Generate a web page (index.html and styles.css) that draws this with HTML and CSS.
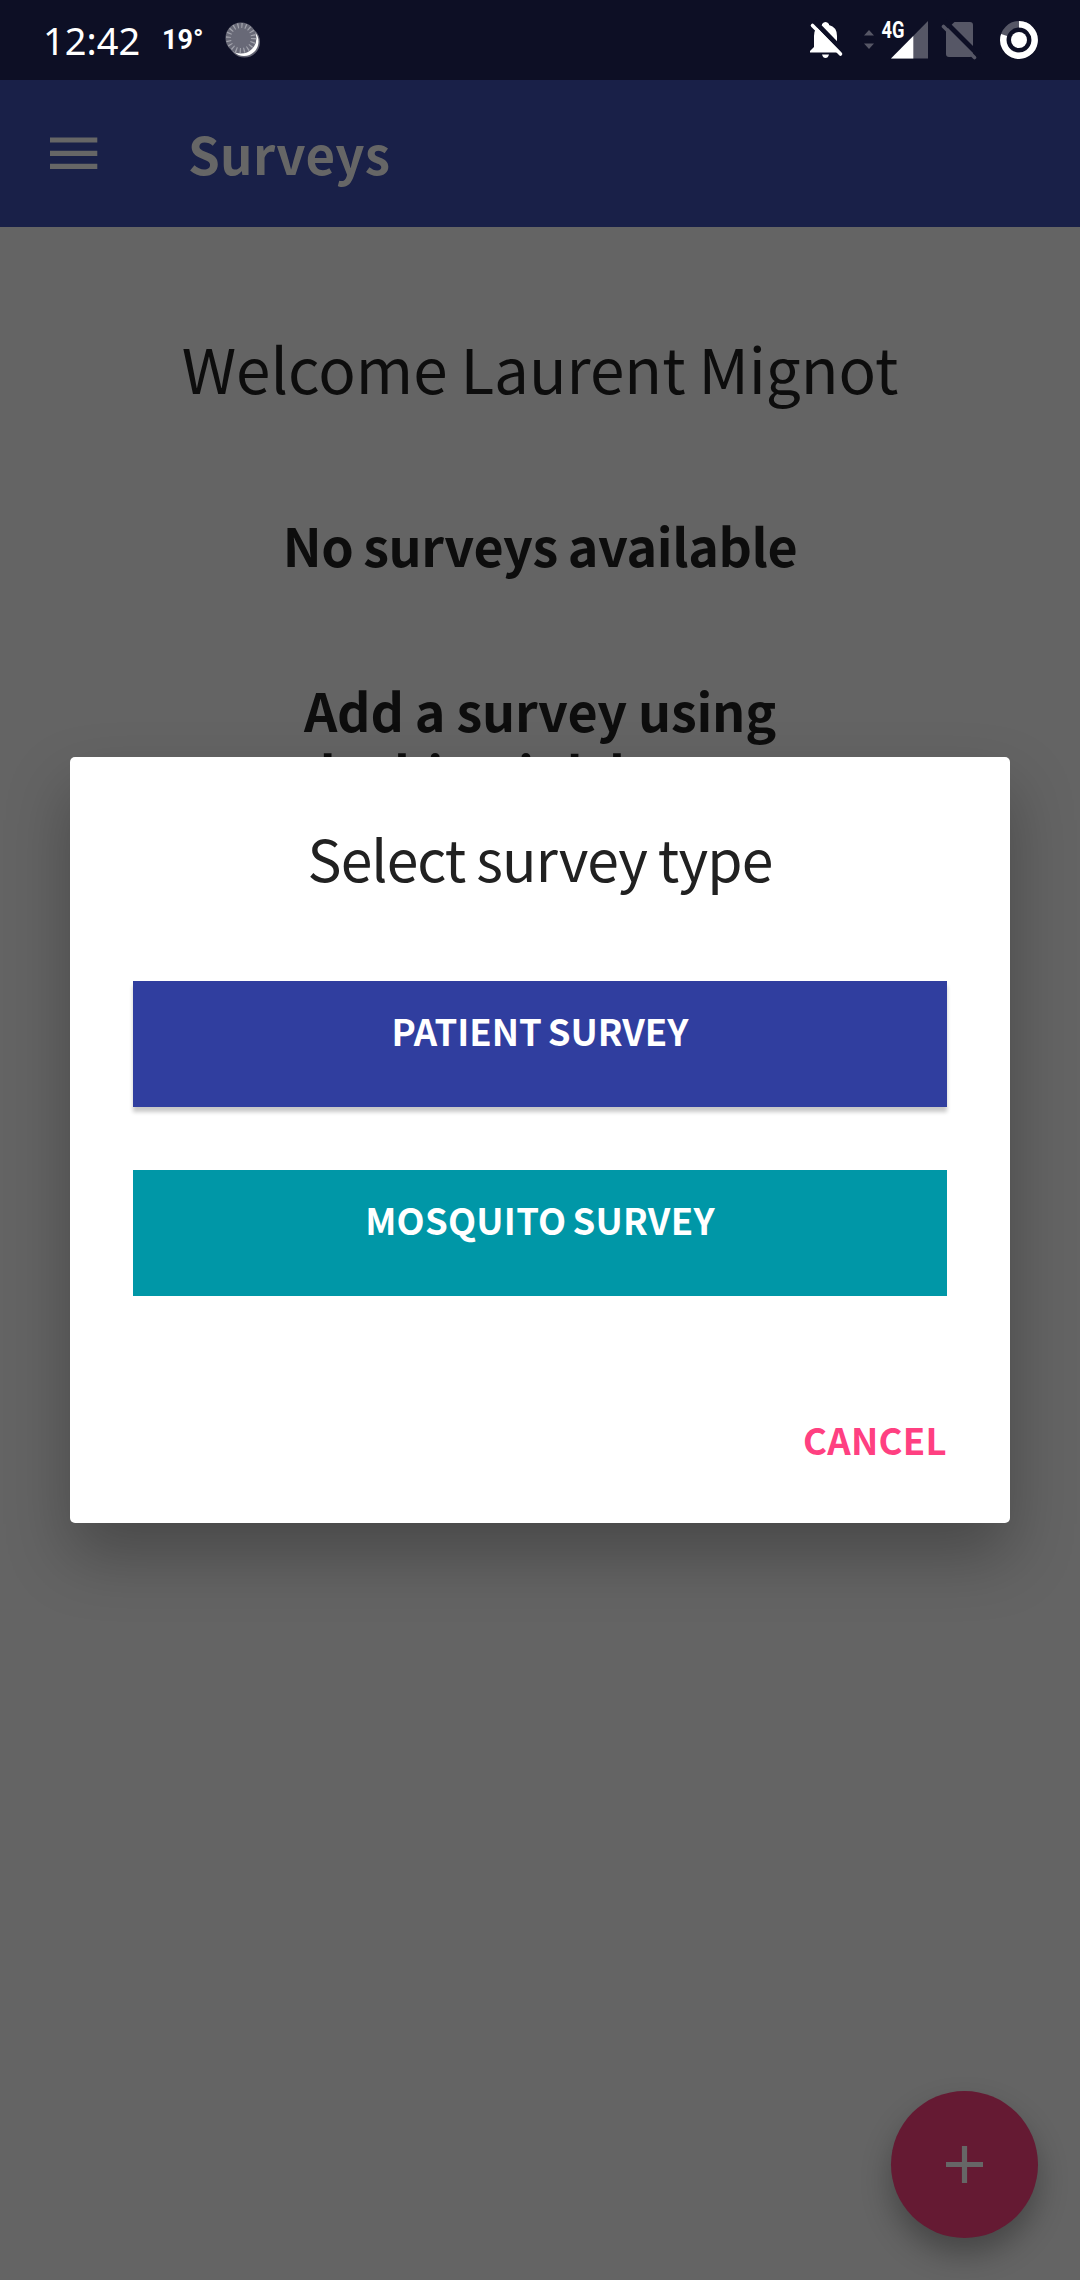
FILE: index.html
```html
<!DOCTYPE html>
<html lang="en">
<head>
<meta charset="utf-8">
<title>Surveys</title>
<link rel="stylesheet" href="styles.css">
</head>
<body>
<div class="screen">
  <header class="status">
    <span class="clock">12:42</span>
    <span class="temp">19°</span>
    <svg class="sync" width="36" height="38" viewBox="0 0 36 38">
      <circle cx="19.5" cy="21" r="15.5" fill="#fff" opacity=".35"/>
      <circle cx="19" cy="20.500" r="14.500" fill="#fff"/>
      <circle cx="16" cy="17" r="15.500" fill="#686977"/>
      <circle cx="16" cy="17" r="12.500" fill="none" stroke="#a3a4ad" stroke-width="5" stroke-dasharray="1.2 2.727"/>
    </svg>
    <svg class="indicators" width="240" height="50" viewBox="800 10 240 50">
      <g fill="#fff">
        <path d="M810 52.500v-1.500l4-4V36q0-9 8-11v-1q3.500-4 7 0v1q8 2 8 11v11l4 4v1.500zM822 54.500h7q-1 3.500-3.500 3.500t-3.500-3.500z"/>
        <path d="M814 21l30 31" stroke="#0d0f25" stroke-width="5"/>
        <path d="M812.500 25.500L840.500 54" stroke="#fff" stroke-width="3.600" stroke-linecap="round"/>
      </g>
      <path d="M864 35.500l5-5.500 5 5.500zM864 43.500h10l-5 5.500z" fill="#565766"/>
      <path d="M928 21v37.500h-37z" fill="#565766"/>
      <path d="M913.300 36v22.500H891z" fill="#fff"/>
      <text class="network" x="881.500" y="37.500" textLength="23" lengthAdjust="spacingAndGlyphs">4G</text>
      <path d="M954.500 22H970q3 0 3 3v29q0 3-3 3h-21q-3 0-3-3V30z" fill="#565766"/>
      <path d="M945 21.500l34 34" stroke="#0d0f25" stroke-width="5"/>
      <path d="M943.500 26.500l31 31" stroke="#565766" stroke-width="3.600" stroke-linecap="round"/>
      <circle cx="1019" cy="40" r="15.700" fill="none" stroke="#565766" stroke-width="6.400"/>
      <path d="M1019 24.300A15.700 15.700 0 1 1 1004.100 35" fill="none" stroke="#fff" stroke-width="6.400"/>
      <circle cx="1019" cy="40" r="8" fill="#fff"/>
    </svg>
  </header>
  <nav class="toolbar">
    <svg class="menu" width="48" height="33" viewBox="0 0 48 33"><path d="M0 3h47.300M0 16.300h47.300M0 29.300h47.300" stroke="#666" stroke-width="5.200"/></svg>
    <h1 class="heading">Surveys</h1>
  </nav>
  <main class="content">
    <p class="welcome">Welcome Laurent Mignot</p>
    <p class="note none">No surveys available</p>
    <p class="note hint">Add a survey using<br>the big pink button</p>
  </main>
  <button class="fab" aria-label="Add"><svg width="37" height="37" viewBox="0 0 37 37"><path d="M0 18.500h37M18.500 0v37" stroke="#666" stroke-width="5.200"/></svg></button>
  <section class="dialog">
    <h2 class="title">Select survey type</h2>
    <div class="choices">
      <button class="choice patient">PATIENT SURVEY</button>
      <button class="choice mosquito">MOSQUITO SURVEY</button>
    </div>
    <button class="cancel">CANCEL</button>
  </section>
</div>
</body>
</html>
```
FILE: styles.css
```css
* { box-sizing: border-box; }
body { margin: 0; background: #646464; }
.screen {
  position: relative;
  display: flex;
  flex-direction: column;
  width: 1080px;
  height: 2280px;
  overflow: hidden;
  background: #646464;
  color: #0d0d0d;
  font-family: "Noto Sans CJK SC", "Noto Sans", sans-serif;
}
h1, h2, p { margin: 0; }
button { border: 0; padding: 0; font: inherit; color: inherit; }
.status {
  display: flex;
  align-items: center;
  height: 80px;
  padding-left: 43px;
  padding-right: 40px;
  background: #0d0f25;
  color: #fff;
}
.clock { width: 98px; font: 38px/50px "Noto Sans", sans-serif; }
.temp { width: 42px; margin-left: 21px; font: 700 27px/40px Roboto, sans-serif; }
.sync { margin-left: 21px; }
.indicators { margin-left: auto; margin-bottom: 10px; }
.network { font: 700 23px Roboto, sans-serif; fill: #fff; }
.toolbar {
  display: flex;
  align-items: center;
  height: 147px;
  padding-left: 50px;
  background: #192048;
  color: #666;
}
.heading { margin-left: 90px; padding-bottom: 2px; font-size: 51px; font-weight: 700; line-height: 70px; letter-spacing: .3px; }
.content { padding-top: 100px; text-align: center; }
.welcome { font-size: 62px; line-height: 80px; word-spacing: -1px; }
.note { font-size: 52px; font-weight: 700; line-height: 62.4px; }
.none { margin-top: 107px; letter-spacing: -.4px; word-spacing: -1.5px; }
.hint { margin-top: 103px; letter-spacing: -.2px; word-spacing: -.5px; }
.fab {
  position: absolute;
  right: 42px;
  bottom: 42px;
  display: grid;
  place-items: center;
  width: 147px;
  height: 147px;
  border-radius: 50%;
  background: #651a33;
  box-shadow: 0 16px 30px rgba(0, 0, 0, .3);
}
.dialog {
  position: absolute;
  top: 757px;
  left: 70px;
  display: flex;
  flex-direction: column;
  width: 940px;
  height: 766px;
  padding: 60px 63px 0;
  border-radius: 5px;
  background: #fff;
  color: #212121;
  box-shadow: 0 32px 64px rgba(0, 0, 0, .28);
}
.title { text-align: center; font-size: 57px; font-weight: 400; line-height: 80px; letter-spacing: -.9px; word-spacing: -1px; }
.choices { display: grid; gap: 63px; margin-top: 84px; }
.choice {
  display: flex;
  justify-content: center;
  height: 126px;
  padding-top: 20px;
  color: #fff;
  font-size: 36.5px;
  font-weight: 700;
  line-height: 60px;
  word-spacing: -2.5px;
}
.patient { background: #303e9f; box-shadow: 0 5px 4px rgba(0, 0, 0, .22); }
.mosquito { background: #0097a7; letter-spacing: .25px; }
.cancel { align-self: flex-end; margin-top: 114px; background: none; color: #ff4081; font-size: 36.5px; font-weight: 700; line-height: 60px; letter-spacing: .3px; }
```
